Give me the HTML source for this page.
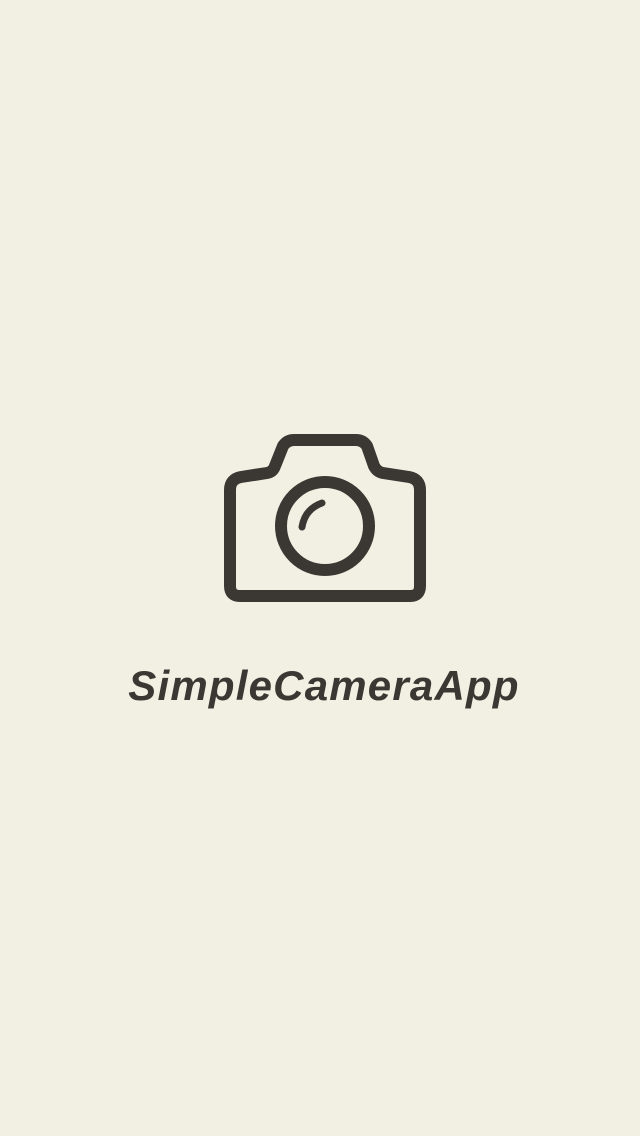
<!DOCTYPE html>
<html><head><style>
html,body{margin:0;padding:0}
body{width:640px;height:1136px;background:#f2efe3;position:relative;overflow:hidden}
.t{position:absolute;left:4px;width:640px;top:662px;text-align:center;font-family:"Liberation Sans",sans-serif;font-weight:bold;font-style:italic;font-size:42px;color:#3b3834;letter-spacing:1.2px}
</style></head><body>
<svg width="640" height="1136" style="position:absolute;left:0;top:0">
<g fill="none" stroke="#3b3834" stroke-width="12" stroke-linejoin="round" stroke-linecap="round">
<path d="M241 477 L267 473 Q273 472 275 466 L283 446 Q287 440 294 440 L356 440 Q363 440 367 446 L374 466 Q377 472 383 473 L409 477 Q420 479 420 490 L420 586 Q420 596 410 596 L240 596 Q230 596 230 586 L230 490 Q230 479 241 477 Z"/>
<circle cx="325" cy="526" r="44"/>
<path d="M302 527 Q305 509 322 503" stroke-width="7"/>
</g>
</svg>
<div class="t">SimpleCameraApp</div>
</body></html>
